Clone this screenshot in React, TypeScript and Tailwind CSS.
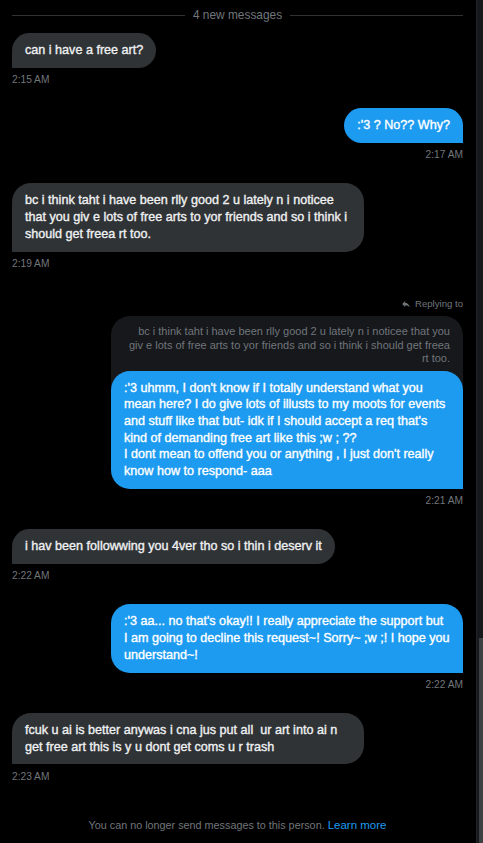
import React from 'react';

type Msg = {
  side: 'in' | 'out';
  text: string;
  time: string;
  reply?: string;
};

const MESSAGES: Msg[] = [
  { side: 'in', text: 'can i have a free art?', time: '2:15 AM' },
  { side: 'out', text: ":'3 ? No?? Why?", time: '2:17 AM' },
  {
    side: 'in',
    text: 'bc i think taht i have been rlly good 2 u lately n i noticee that you giv e lots of free arts to yor friends and so i think i should get freea rt too.',
    time: '2:19 AM',
  },
  {
    side: 'out',
    reply:
      'bc i think taht i have been rlly good 2 u lately n i noticee that you giv e lots of free arts to yor friends and so i think i should get freea rt too.',
    text: ":'3 uhmm, I don't know if I totally understand what you mean here? I do give lots of illusts to my moots for events and stuff like that but- idk if I should accept a req that's kind of demanding free art like this ;w ; ??\nI dont mean to offend you or anything , I just don't really know how to respond- aaa",
    time: '2:21 AM',
  },
  { side: 'in', text: 'i hav been followwing you 4ver tho so i thin i deserv it', time: '2:22 AM' },
  {
    side: 'out',
    text: ":'3 aa... no that's okay!! I really appreciate the support but I am going to decline this request~! Sorry~ ;w ;! I hope you understand~!",
    time: '2:22 AM',
  },
  {
    side: 'in',
    text: 'fcuk u ai is better anywas i cna jus put all  ur art into ai n get free art this is y u dont get coms u r trash',
    time: '2:23 AM',
  },
];

function ReplyIcon() {
  return (
    <svg viewBox="0 0 24 24" className="w-[10px] h-[10px] fill-[#71767b]">
      <path d="M10 9V5l-7 7 7 7v-4.1c5 0 8.5 1.6 11 5.1-1-5-4-10-11-11z" />
    </svg>
  );
}

function MessageGroup({ msg }: { msg: Msg }) {
  const isOut = msg.side === 'out';

  if (msg.reply) {
    return (
      <div className="flex flex-col items-end self-end w-[352px]">
        <div className="flex items-center gap-[4px] mt-[6px] mb-[6px] text-[9.6px] leading-[12px] text-[#71767b]">
          <ReplyIcon />
          <span>Replying to</span>
        </div>
        <div className="w-full bg-[#16181c] rounded-t-[19px] px-[13px] pt-[9px] pb-[25px] text-right text-[11px] leading-[13.5px] text-[#71767b]">
          {msg.reply}
        </div>
        <div className="relative -mt-[20px] w-full bg-[#1d9bf0] text-white rounded-[19px] rounded-br-none px-[13px] py-[9px] text-[12.6px] leading-[16.7px] whitespace-pre-wrap [-webkit-text-stroke:0.35px_#fff]">
          {msg.text}
        </div>
        <div className="mt-[6.5px] text-[10.2px] leading-[12px] text-[#71767b]">{msg.time}</div>
      </div>
    );
  }

  return (
    <div className={isOut ? 'flex flex-col items-end self-end' : 'flex flex-col items-start self-start'}>
      <div
        className={
          isOut
            ? 'max-w-[352px] bg-[#1d9bf0] text-white rounded-[19px] rounded-br-none px-[13px] py-[9px] text-[12.6px] leading-[16.7px] whitespace-pre-wrap [-webkit-text-stroke:0.35px_#fff]'
            : 'max-w-[352px] bg-[#2f3336] text-[#eff1f2] rounded-[19px] rounded-bl-none px-[13px] py-[9px] text-[12.6px] leading-[16.7px] whitespace-pre-wrap [-webkit-text-stroke:0.35px_#eff1f2]'
        }
      >
        {msg.text}
      </div>
      <div className="mt-[6.5px] text-[10.2px] leading-[12px] text-[#71767b]">{msg.time}</div>
    </div>
  );
}

export default function App() {
  return (
    <div className="w-full h-[843px] bg-black flex overflow-hidden font-['Liberation_Sans',Arial,sans-serif]">
      <div className="flex-1 flex flex-col pl-[12px] pr-[13px] pt-[7px]">
        <div className="flex items-center gap-[8px] h-[16px]">
          <div className="flex-1 h-px bg-[#2f3336]" />
          <span className="text-[11.9px] leading-[16px] text-[#71767b]">4 new messages</span>
          <div className="flex-1 h-px bg-[#2f3336]" />
        </div>

        <div className="flex flex-col gap-[22px] mt-[10px]">
          {MESSAGES.map((m, i) => (
            <MessageGroup key={i} msg={m} />
          ))}
        </div>

        <div className="mt-[35px] text-center text-[10.8px] leading-[14px] text-[#71767b]">
          You can no longer send messages to this person.{' '}
          <span className="text-[11.5px] text-[#1d9bf0]">Learn more</span>
        </div>
      </div>

      <div className="w-[7px] h-full flex flex-col bg-[#16181c] border-l border-[#202327]">
        <div className="mt-[638px] flex-1 ml-[2px] bg-[#3e4144]" />
      </div>
    </div>
  );
}
